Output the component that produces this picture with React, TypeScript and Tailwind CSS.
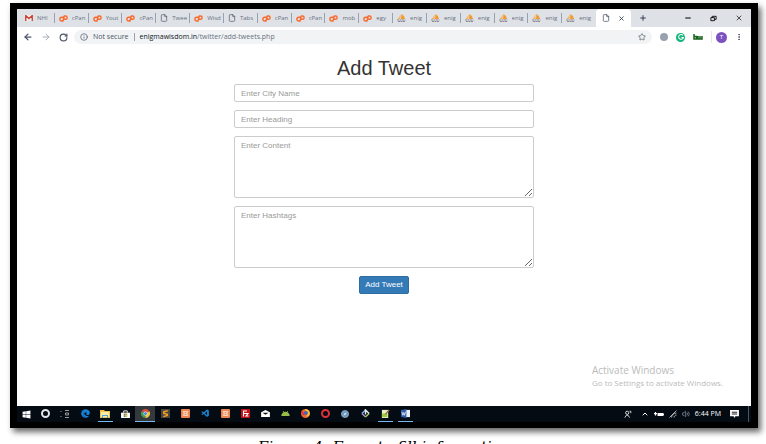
import React, { useState } from "react";
import { FaEdge, FaWindows } from "react-icons/fa";
import { VscVscode } from "react-icons/vsc";
import { ArrowLeft, ArrowRight, ChevronUp, File, Info, Minus, MoreVertical, Plus, RotateCw, Star, Volume2, X } from "lucide-react";

type TabKind = "gmail" | "cpanel" | "file" | "pma";

interface TabItem {
  kind: TabKind;
  label: string;
}

const tabs: TabItem[] = [
  { kind: "gmail", label: "NHI" },
  { kind: "cpanel", label: "cPan" },
  { kind: "cpanel", label: "Yout" },
  { kind: "cpanel", label: "cPan" },
  { kind: "file", label: "Twee" },
  { kind: "cpanel", label: "Wisd" },
  { kind: "file", label: "Tabs" },
  { kind: "cpanel", label: "cPan" },
  { kind: "cpanel", label: "cPan" },
  { kind: "cpanel", label: "mob" },
  { kind: "cpanel", label: "egy" },
  { kind: "pma", label: "enig" },
  { kind: "pma", label: "enig" },
  { kind: "pma", label: "enig" },
  { kind: "pma", label: "enig" },
  { kind: "pma", label: "enig" },
  { kind: "pma", label: "enig" },
];

function TabIcon({ kind }: { kind: TabKind }) {
  switch (kind) {
    case "gmail":
      return (
        <svg viewBox="0 0 16 12" className="w-2 h-1.5 shrink-0">
          <rect width="16" height="12" fill="#eee" />
          <path d="M1.500 12V1l6.500 6 6.500-6v11" fill="none" stroke="#c8402f" strokeWidth="2.6" />
        </svg>
      );
    case "cpanel":
      return (
        <svg viewBox="0 0 18 14" className="w-[9px] h-[7px] shrink-0" fill="none" stroke="#f9692c" strokeWidth="2.800" strokeLinecap="round" strokeLinejoin="round">
          <path d="M8.500 4.500H5.500a3.500 3.500 0 0 0 0 7.500H8L10.500 2H13a3.200 3.200 0 0 1 0 6.500h-2.500" />
        </svg>
      );
    case "file":
      return <File className="w-2 h-2 shrink-0 text-gray-600" />;
    case "pma":
      return (
        <svg viewBox="0 0 18 16" className="w-[9px] h-2 shrink-0">
          <path d="M7 0q-1 5-6 10h6z" fill="#f5b25a" />
          <path d="M9 0q6 3 7 10H8z" fill="#f29a2e" />
          <path d="M0 12h17M2 15h14" stroke="#8d8a94" strokeWidth="2" strokeDasharray="4 1" />
        </svg>
      );
  }
}

function TabStrip() {
  return (
    <div className="flex h-[18px] bg-[#dee1e6] pl-1 text-gray-700">
      <div className="flex flex-1 min-w-0">
        {tabs.map((tab, i) => (
          <button key={i} type="button" className="flex flex-1 min-w-0 items-center py-1">
            <span className={`flex flex-1 min-w-0 h-full items-center gap-1 pl-1 border-r ${i === tabs.length - 1 ? "border-transparent" : "border-gray-400"}`}>
              <TabIcon kind={tab.kind} />
              <span className="flex-1 min-w-0 overflow-hidden whitespace-nowrap text-left text-[6px] leading-[10px] text-gray-500">
                {tab.label}
              </span>
            </span>
          </button>
        ))}
      </div>
      <button type="button" aria-label="Add Tweet tab" className="flex w-[35px] items-center justify-between rounded-t bg-white px-1.5">
        <File className="w-2 h-2" />
        <X className="w-[7px] h-[7px]" strokeWidth={3} />
      </button>
      <div className="flex w-[120px] items-center justify-between px-2">
        <button type="button" aria-label="New tab"><Plus className="w-2 h-2" strokeWidth={3} /></button>
        <div className="flex items-center gap-[18px] text-black">
          <button type="button" aria-label="Minimize"><Minus className="w-2 h-2" strokeWidth={3} /></button>
          <button type="button" aria-label="Restore">
            <svg viewBox="0 0 8 8" className="w-[7px] h-[7px]" fill="none" stroke="currentColor">
              <path d="M1 3h4v3.500H1zM2.500 3V1.500H7V5H5" />
            </svg>
          </button>
          <button type="button" aria-label="Close"><X className="w-2 h-2" /></button>
        </div>
      </div>
    </div>
  );
}

function AddressBar() {
  return (
    <div className="flex h-5 items-center bg-white pl-1.5 pr-2 text-gray-600">
      <div className="flex w-[45px] items-center justify-between">
        <button type="button" aria-label="Back"><ArrowLeft className="w-2.5 h-2.5" strokeWidth={3} /></button>
        <button type="button" aria-label="Forward"><ArrowRight className="w-2.5 h-2.5 text-gray-400" /></button>
        <button type="button" aria-label="Reload"><RotateCw className="w-[9px] h-[9px]" strokeWidth={3} /></button>
      </div>
      <div className="ml-1.5 flex h-3.5 flex-1 items-center rounded-full bg-[#f1f3f4] px-1.5">
        <Info className="w-2 h-2" />
        <span className="ml-[5px] text-[7px] leading-[10px]">Not secure</span>
        <span className="mx-[5px] h-2 w-px bg-gray-400" />
        <span className="flex-1 text-[7px] leading-[10px] text-gray-500">
          <span className="text-gray-900">enigmawisdom.in</span>/twitter/add-tweets.php
        </span>
        <Star className="w-2 h-2" />
      </div>
      <div className="ml-2 flex items-center gap-2">
        <span className="w-2 h-2 rounded-full bg-gray-400" />
        <span className="flex w-[9px] h-[9px] items-center justify-center rounded-full bg-[#15b57c]">
          <svg viewBox="0 0 10 10" className="w-2 h-2" fill="none" stroke="white" strokeWidth="1.300">
            <path d="M7.500 3A3 3 0 1 0 8 5.500H5.500" />
          </svg>
        </span>
        <svg viewBox="0 0 20 12" className="w-2.5 h-1.5" fill="none" stroke="#17641c" strokeWidth="3">
          <path d="M2 0v10h5V5H2M10 4v6h8V4M14 4v6" />
        </svg>
        <span className="h-3 w-px bg-gray-200" />
      </div>
      <div className="ml-1 flex items-center gap-2">
        <span className="flex w-[11px] h-[11px] items-center justify-center rounded-full bg-[#7d51c0] text-[6px] leading-[8px] text-white">T</span>
        <MoreVertical className="w-2 h-2" strokeWidth={3} />
      </div>
    </div>
  );
}

const fieldClass =
  "block w-full rounded-[2px] border border-[#ccc] bg-white px-1.5 text-[8px] leading-[10px] text-[#555] placeholder:text-[#999] outline-none";

function TweetForm() {
  const [city, setCity] = useState("");
  const [heading, setHeading] = useState("");
  const [content, setContent] = useState("");
  const [hashtags, setHashtags] = useState("");

  return (
    <main className="flex-1 min-h-0 bg-white pt-2.5 font-['Liberation_Sans',sans-serif]">
      <h1 className="text-center text-[20px] leading-[22px] text-[#333]">Add Tweet</h1>
      <form
        onSubmit={(e) => e.preventDefault()}
        className="mx-auto mt-[5px] flex w-[300px] flex-col items-center gap-2"
      >
        <input aria-label="City name" placeholder="Enter City Name" value={city} onChange={(e) => setCity(e.target.value)} className={`${fieldClass} h-[18px]`} />
        <input aria-label="Heading" placeholder="Enter Heading" value={heading} onChange={(e) => setHeading(e.target.value)} className={`${fieldClass} h-[18px]`} />
        <textarea aria-label="Content" placeholder="Enter Content" value={content} onChange={(e) => setContent(e.target.value)} className={`${fieldClass} h-[62px] py-1`} />
        <textarea aria-label="Hashtags" placeholder="Enter Hashtags" value={hashtags} onChange={(e) => setHashtags(e.target.value)} className={`${fieldClass} h-[62px] py-1`} />
        <button type="submit" className="h-[18px] rounded-[2px] border border-[#2e6da4] bg-[#337ab7] px-[5px] text-[8px] leading-[10px] text-white">
          Add Tweet
        </button>
      </form>
    </main>
  );
}

function XamppIcon() {
  return (
    <svg viewBox="0 0 18 18" className="w-[9px] h-[9px]">
      <rect width="18" height="18" rx="2" fill="#ee8550" />
      <path d="M4 4l3 5-3 5M14 4l-3 5 3 5M6 5h6v8H6zM7 9h4" fill="none" stroke="#fde3d3" strokeWidth="1.600" />
    </svg>
  );
}

const taskbarApps: { name: string; open?: boolean; active?: boolean; icon: React.ReactNode }[] = [
  { name: "Search", icon: <span className="w-[9px] h-[9px] rounded-full border-2 border-gray-200" /> },
  {
    name: "Task view",
    icon: (
      <svg viewBox="0 0 10 10" className="w-2.5 h-2.5" fill="none" stroke="#999">
        <path d="M1 2v1M1 7v1M5 1.500h4M5.500 4h3v2h-3zM5 8.500h4" />
      </svg>
    ),
  },
  { name: "Edge", icon: <FaEdge className="w-[9px] h-[9px] text-[#1680d8]" /> },
  {
    name: "File Explorer",
    open: true,
    icon: (
      <svg viewBox="0 0 10 8" className="w-2.5 h-2">
        <path d="M0 0h4l1 1h5v7H0z" fill="#eec14f" />
        <path d="M1 2h8v5H1z" fill="#fbe9a4" />
        <path d="M2 5h6v3H7V6H3v2H2z" fill="#4ba3dc" />
      </svg>
    ),
  },
  {
    name: "Store",
    icon: (
      <svg viewBox="0 0 10 9" className="w-[9px] h-2">
        <path d="M3 3V1h4v2" fill="none" stroke="#fff" />
        <path d="M0 3h10v6H0z" fill="#fff" />
        <path d="M3 4h2v2H3z" fill="#e5482d" />
        <path d="M5 4h2v2H5z" fill="#7db53c" />
        <path d="M3 6h2v2H3z" fill="#2e91d2" />
        <path d="M5 6h2v2H5z" fill="#e9b32c" />
      </svg>
    ),
  },
  {
    name: "Chrome",
    open: true,
    active: true,
    icon: (
      <svg viewBox="0 0 20 20" className="w-[9px] h-[9px]">
        <path d="M10 10L1.300 5a10 10 0 0 1 17.400 0z" fill="#dc4b3e" />
        <path d="M10 10V20A10 10 0 0 1 1.300 5z" fill="#3f9f57" />
        <path d="M10 10l8.700-5A10 10 0 0 1 10 20z" fill="#f2c63b" />
        <circle cx="10" cy="10" r="4.500" fill="#fff" />
        <circle cx="10" cy="10" r="3.500" fill="#4a86e0" />
      </svg>
    ),
  },
  {
    name: "Sublime Text",
    icon: (
      <svg viewBox="0 0 10 10" className="w-[9px] h-[9px]">
        <path d="M0 0h10v10H0z" fill="#474640" />
        <path d="M7.500 2L3 3.200v1.600l4 1v1.500L2.500 8.500" fill="none" stroke="#f49b20" strokeWidth="1.600" />
      </svg>
    ),
  },
  { name: "XAMPP", icon: <XamppIcon /> },
  { name: "VS Code", icon: <VscVscode className="w-[9px] h-[9px] text-[#1b80c9]" /> },
  { name: "XAMPP Control", icon: <XamppIcon /> },
  {
    name: "FileZilla",
    icon: (
      <svg viewBox="0 0 18 18" className="w-[9px] h-[9px]">
        <rect width="18" height="18" fill="#c30f19" />
        <path d="M5 15V4h7M5 9h5M10 9h4l-4 5h5" fill="none" stroke="#fff" strokeWidth="2.200" />
      </svg>
    ),
  },
  {
    name: "Mail",
    icon: (
      <svg viewBox="0 0 10 8" className="w-[9px] h-[7px]">
        <path d="M0 2.500L5 0l5 2.500V8H0z" fill="#fff" />
        <path d="M1.500 3h7L5 5.500z" fill="#111" />
      </svg>
    ),
  },
  {
    name: "Android",
    icon: (
      <svg viewBox="0 0 10 6" className="w-[9px] h-[5px]">
        <path d="M0 6a5 5 0 0 1 10 0z" fill="#98bd49" />
        <path d="M2 0l1.500 2M8 0L6.500 2" stroke="#98bd49" />
      </svg>
    ),
  },
  {
    name: "Firefox",
    icon: (
      <svg viewBox="0 0 20 20" className="w-[9px] h-[9px]">
        <circle cx="10" cy="10" r="10" fill="#ee6530" />
        <path d="M9 0a10 10 0 0 1 10 13c-2 4-6 4-9 3 5-2 4-7 1-9z" fill="#fcc42f" />
        <circle cx="11" cy="9" r="4.500" fill="#4065bd" />
        <path d="M1 6c4-2 4 2 7 4 1 3-2 4-5 3z" fill="#e33547" />
      </svg>
    ),
  },
  { name: "Opera", icon: <span className="w-[9px] h-[9px] rounded-full border-2 border-[#e1303a]" /> },
  {
    name: "Browser",
    icon: (
      <svg viewBox="0 0 10 10" className="w-2 h-2">
        <circle cx="5" cy="5" r="4.500" fill="#6b9bc4" stroke="#8fa6b8" />
        <path d="M3 7l1.500-3L7 3 5.500 6z" fill="#e6e8ea" />
      </svg>
    ),
  },
  {
    name: "Git",
    icon: (
      <svg viewBox="0 0 10 10" className="w-[9px] h-[9px]" fill="none" strokeWidth="1.600">
        <path d="M5 1L1 5" stroke="#79b6e8" />
        <path d="M1 5l4 4" stroke="#b38bd9" />
        <path d="M5 9l4-4" stroke="#9bc95a" />
        <path d="M9 5L5 1v5" stroke="#e8eaec" />
      </svg>
    ),
  },
  {
    name: "Notepad++",
    open: true,
    icon: (
      <svg viewBox="0 0 10 10" className="w-[9px] h-[9px]">
        <path d="M1 1h7v9H1z" fill="#e8f0c8" />
        <path d="M1 5h6v4H1z" fill="#9ccc3c" />
        <path d="M9 1L5 6" stroke="#9b6a38" strokeWidth="1.500" />
      </svg>
    ),
  },
  {
    name: "Word",
    open: true,
    icon: (
      <svg viewBox="0 0 10 10" className="w-[9px] h-[9px]">
        <path d="M4 1h6v8H4z" fill="#e9eff8" />
        <path d="M0 1l6-1v10L0 9z" fill="#2b5aa8" />
        <path d="M1 3l1 4 1-3 1 3 1-4" fill="none" stroke="#fff" strokeWidth=".8" />
      </svg>
    ),
  },
];

function Taskbar() {
  return (
    <footer className="flex h-4 items-stretch bg-[#040b13] text-white">
      <button type="button" aria-label="Start" className="flex w-[18px] items-center justify-center">
        <FaWindows className="w-[9px] h-[9px]" />
      </button>
      {taskbarApps.map((app) => (
        <button
          key={app.name}
          type="button"
          aria-label={app.name}
          className={`flex w-5 flex-col items-center ${app.active ? "bg-[#34393d]" : ""}`}
        >
          <span className="flex flex-1 items-center justify-center">{app.icon}</span>
          <span className={`h-px ${app.active ? "w-full" : "w-[15px]"} ${app.open ? "bg-[#76b9ed]" : ""}`} />
        </button>
      ))}
      <div className="ml-auto flex items-center gap-[5px] pr-0.5">
        <svg viewBox="0 0 10 10" className="w-2 h-2" fill="none" stroke="currentColor">
          <circle cx="4" cy="3.500" r="2" />
          <path d="M1 9.500l2-3h2l2 3M7 1.500h1.500V4" />
        </svg>
        <ChevronUp className="ml-1 w-2 h-2" strokeWidth={3} />
        {/* battery with the plug in front */}
        <svg viewBox="0 0 20 12" className="w-2.5 h-1.5">
          <path d="M7 4h11v6H7z" fill="#fff" />
          <path d="M0 5h6M3 2v7M19 5v4" stroke="#fff" strokeWidth="2.500" />
        </svg>
        <svg viewBox="0 0 16 16" className="w-2 h-2" fill="none" stroke="#ddd" strokeWidth="1.500">
          <path d="M1 15L15 1M5 15c0-4 4-9 10-9M10 15c0-2 2-5 5-5" />
        </svg>
        <Volume2 className="w-2 h-2 text-gray-400" />
        <span className="text-[7px] leading-[10px]">6:44 PM</span>
        <svg viewBox="0 0 10 9" className="ml-1 w-[9px] h-2">
          <path d="M0 0h10v7H6L5 9 4 7H0z" fill="#fff" />
          <path d="M2 2.500h6M2 4.500h6" stroke="#040b13" />
        </svg>
        <span className="ml-1 h-4 w-px bg-gray-600" />
      </div>
    </footer>
  );
}

export default function App() {
  return (
    <div className="flex h-screen flex-col overflow-hidden bg-white pt-[3px] pr-2 pl-2.5 font-['Open_Sans','Noto_Sans',sans-serif]">
      <figure className="flex flex-1 min-h-0 flex-col">
        <div className="relative flex flex-1 min-h-0 flex-col border-x-[7px] border-y-[6px] border-black shadow-[3px_4px_6px_rgba(0,0,0,0.6)]">
          <TabStrip />
          <AddressBar />
          <TweetForm />
          {/* activation watermark floats over the page */}
          <div className="pointer-events-none absolute bottom-[34px] right-7 text-[#bbb]">
            <p className="text-[10px] leading-[13px]">Activate Windows</p>
            <p className="text-[8px] leading-[11px]">Go to Settings to activate Windows.</p>
          </div>
          <Taskbar />
        </div>
        <figcaption className="h-4 pt-2 text-center font-['DejaVu_Serif',serif] text-[15px] leading-[22px] italic text-black">
          Figure 4: Form to fill information
        </figcaption>
      </figure>
    </div>
  );
}
